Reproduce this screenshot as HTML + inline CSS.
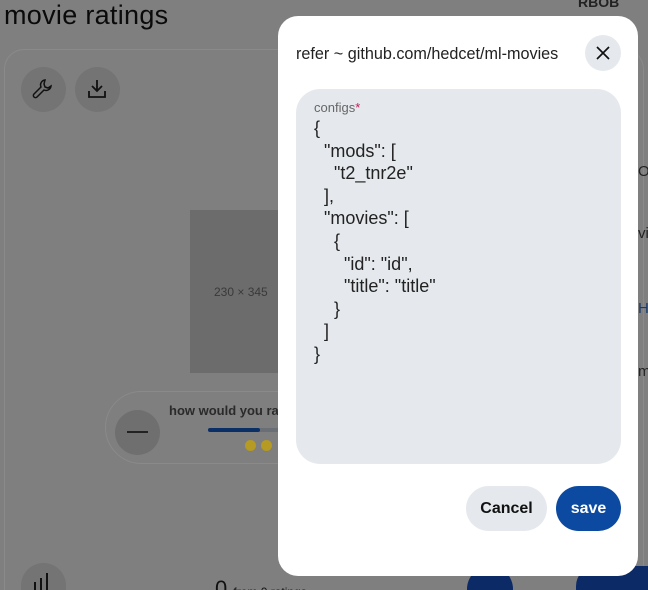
<!DOCTYPE html>
<html><head><style>
*{box-sizing:border-box;margin:0;padding:0}
html,body{width:648px;height:590px;overflow:hidden}
body{background:#7f7f7f;font-family:"Liberation Sans",sans-serif;position:relative}
.abs{position:absolute}
</style></head><body>
<div class="abs" style="left:4px;top:0;font-size:27px;color:#0a0a0a;font-weight:500;letter-spacing:0.3px">movie ratings</div>
<div class="abs" style="left:4px;top:49px;width:640px;height:541px;border:1px solid #8a8a8a;border-bottom:none;border-radius:20px 20px 0 0"></div>
<div class="abs" style="left:21px;top:67px;width:45px;height:45px;border-radius:50%;background:#747474"></div>
<svg class="abs" style="left:31px;top:77px" width="24" height="24" viewBox="0 0 24 24" fill="none" stroke="#111" stroke-width="1.5"><path d="M14 3a5 5 0 0 0-4 7l-7 7a2 2 0 0 0 3 3l7-7a5 5 0 0 0 7-4l-3 2-3-1-1-3z"/></svg>
<div class="abs" style="left:75px;top:67px;width:45px;height:45px;border-radius:50%;background:#747474"></div>
<svg class="abs" style="left:85px;top:77px" width="24" height="24" viewBox="0 0 24 24" fill="none" stroke="#111" stroke-width="1.8"><path d="M12 3v11M7 9l5 5 5-5M4 14v6h16v-6"/></svg>
<div class="abs" style="left:190px;top:210px;width:100px;height:163px;background:#6c6c6c"></div>
<div class="abs" style="left:214px;top:285px;font-size:12px;color:#3a3a3a">230 × 345</div>
<div class="abs" style="left:105px;top:391px;width:300px;height:73px;border:1px solid #8a8a8a;border-radius:37px"></div>
<div class="abs" style="left:115px;top:410px;width:45px;height:45px;border-radius:50%;background:#6f6f6f"></div>
<div class="abs" style="left:127px;top:431px;width:21px;height:2px;background:#222"></div>
<div class="abs" style="left:169px;top:403px;font-size:13px;font-weight:bold;color:#2a2a2a">how would you rate</div>
<div class="abs" style="left:208px;top:428px;width:80px;height:4px;background:#6a6f75;border-radius:2px"></div>
<div class="abs" style="left:208px;top:428px;width:52px;height:4px;background:#0a2e66;border-radius:2px"></div>
<div class="abs" style="left:245px;top:440px;width:11px;height:11px;border-radius:50%;background:#b59a24"></div>
<div class="abs" style="left:261px;top:440px;width:11px;height:11px;border-radius:50%;background:#b59a24"></div>
<div class="abs" style="left:21px;top:563px;width:45px;height:27px;border-radius:23px 23px 0 0;background:#747474"></div>
<div class="abs" style="left:34px;top:582px;width:2px;height:8px;background:#111"></div>
<div class="abs" style="left:40px;top:578px;width:2px;height:12px;background:#111"></div>
<div class="abs" style="left:46px;top:573px;width:2px;height:17px;background:#111"></div>
<div class="abs" style="left:215px;top:576px;height:14px;overflow:hidden;font-size:22px;line-height:26px;color:#111">0 <span style="font-size:12px">from 0 ratings</span></div>
<div class="abs" style="left:467px;top:566px;width:46px;height:24px;border-radius:23px 23px 0 0;background:#0b2a66"></div>
<div class="abs" style="left:576px;top:566px;width:72px;height:24px;border-radius:20px 0 0 0;background:#0b2a66"></div>
<div class="abs" style="left:578px;top:-6px;font-size:14px;font-weight:bold;color:#222">RBOB</div>
<div class="abs" style="left:638px;top:163px;font-size:15px;color:#222">O</div>
<div class="abs" style="left:638px;top:225px;font-size:15px;color:#222">vi</div>
<div class="abs" style="left:638px;top:300px;font-size:15px;color:#1a3a6a">H</div>
<div class="abs" style="left:638px;top:363px;font-size:15px;color:#222">m</div>
<div class="abs" style="left:278px;top:16px;width:360px;height:560px;background:#fff;border-radius:20px"></div>
<div class="abs" style="left:296px;top:45px;font-size:16.2px;color:#222">refer ~ github.com/hedcet/ml-movies</div>
<div class="abs" style="left:585px;top:35px;width:36px;height:36px;border-radius:50%;background:#e5e9ed"></div>
<svg class="abs" style="left:593px;top:43px" width="20" height="20" viewBox="0 0 20 20" stroke="#111" stroke-width="1.7"><path d="M4 4l12 12M16 4L4 16"/></svg>
<div class="abs" style="left:296px;top:89px;width:325px;height:375px;background:#e5e9ed;border-radius:24px"></div>
<div class="abs" style="left:314px;top:100px;font-size:13px;color:#666">configs<span style="color:#c2185b">*</span></div>
<pre class="abs" style="left:314px;top:117px;font-family:'Liberation Sans',sans-serif;font-size:18px;line-height:22.6px;color:#222">{
  "mods": [
    "t2_tnr2e"
  ],
  "movies": [
    {
      "id": "id",
      "title": "title"
    }
  ]
}</pre>
<div class="abs" style="left:466px;top:486px;width:81px;height:45px;border-radius:23px;background:#e5e9ed;font-size:16px;font-weight:bold;color:#111;text-align:center;line-height:45px">Cancel</div>
<div class="abs" style="left:556px;top:486px;width:65px;height:45px;border-radius:23px;background:#0b4aa0;font-size:16px;font-weight:bold;color:#fff;text-align:center;line-height:45px">save</div>
</body></html>
